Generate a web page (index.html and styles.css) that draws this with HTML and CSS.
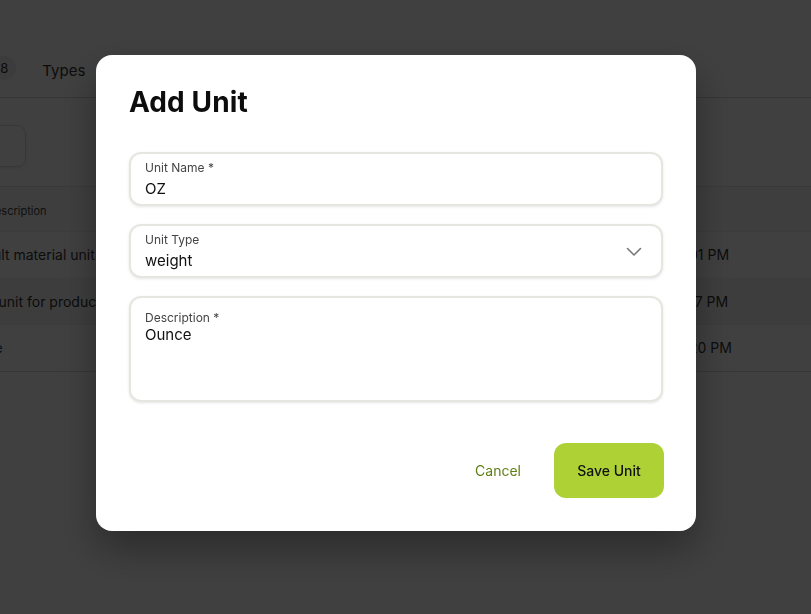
FILE: index.html
```html
<!DOCTYPE html>
<html>
<head>
<meta charset="utf-8">
<link rel="stylesheet" href="styles.css">
</head>
<body>
<div class="page">
  <div class="content">
    <div class="tabs">
      <div class="tab">Units <span class="badge">8</span></div>
      <div class="tab">Types</div>
    </div>
    <div class="toolbar">
      <div class="search">Search units</div>
    </div>
    <div class="table">
      <div class="row head"><span class="c1">Description</span><span class="c2">Updated</span></div>
      <div class="row"><span class="c1">Default material unit</span><span class="c2">Jan 12, 2024 4:01 PM</span></div>
      <div class="row alt"><span class="c1">Base unit for products</span><span class="c2">Jan 12, 2024 4:17 PM</span></div>
      <div class="row"><span class="c1 link">Single</span><span class="c2">Jan 12, 2024 4:20 PM</span></div>
    </div>
  </div>
</div>
<div class="overlay">
  <div class="modal">
    <h1 class="title">Add Unit</h1>
    <div class="fields">
      <div class="field">
        <div class="label">Unit Name *</div>
        <div class="value">OZ</div>
      </div>
      <div class="field select">
        <div class="select-text">
          <div class="label">Unit Type</div>
          <div class="value">weight</div>
        </div>
        <svg class="chev" width="16" height="10" viewBox="0 0 16 10"><path d="M1.5 1.5 L8 8 L14.5 1.5" fill="none" stroke="#777" stroke-width="1.6" stroke-linecap="round" stroke-linejoin="round"/></svg>
      </div>
      <div class="field area">
        <div class="label">Description *</div>
        <div class="value">Ounce</div>
      </div>
    </div>
    <div class="actions">
      <button class="btn cancel">Cancel</button>
      <button class="btn save">Save Unit</button>
    </div>
  </div>
</div>
</body>
</html>
```

FILE: styles.css
```css
* { box-sizing: border-box; }
html, body { margin: 0; padding: 0; }
body {
  font-family: Inter, "Liberation Sans", sans-serif;
  background: #ffffff;
  color: #111;
  width: 811px;
  height: 614px;
  overflow: hidden;
}
.page {
  width: 811px;
  height: 614px;
  overflow: hidden;
}
.content {
  margin-left: -64px;
  width: 900px;
}
.tabs {
  height: 98px;
  display: flex;
  align-items: flex-end;
  gap: 26px;
  padding-bottom: 17px;
  border-bottom: 1px solid #d6d6d6;
  padding-left: 12px;
}
.tab {
  font-size: 15px;
  color: #333;
  display: flex;
  align-items: center;
  gap: 8px;
}
.badge {
  width: 24px;
  height: 24px;
  border-radius: 50%;
  background: #eeeeee;
  font-size: 13px;
  display: flex;
  align-items: center;
  justify-content: center;
}
.toolbar {
  padding: 27px 0 19px 0;
}
.search {
  width: 90px;
  height: 42px;
  border: 1px solid #dcdcdc;
  border-radius: 9px;
  box-shadow: 0 1px 3px rgba(0,0,0,0.12);
  color: transparent;
  font-size: 13px;
  padding: 12px;
}
.table {
  border-top: 1px solid #e4e4e4;
}
.row {
  display: grid;
  grid-template-columns: 680px 200px;
  height: 46.5px;
  align-items: center;
  font-size: 14px;
  color: #333;
  border-bottom: 1px solid #f0f0f0;
}
.row.head {
  height: 45px;
  font-size: 11px;
  color: #444;
  background: #f8f8f8;
  padding-top: 3px;
}
.row.head .c1 { padding-left: 51px; }
.row.alt { background: #f4f4f4; }
.row:last-child { border-bottom: 1px solid #d8d8d8; }
.c1 { padding-left: 26px; }
.c2 { margin-left: -29px; }
.link { color: #2c4d8f; }

.overlay {
  position: fixed;
  inset: 0;
  background: rgba(0,0,0,0.75);
  display: flex;
  align-items: flex-start;
  padding: 55px 0 0 96px;
}
.modal {
  width: 600px;
  height: 476px;
  background: #fff;
  border-radius: 16px;
  padding: 32px 33px 33px 33px;
  box-shadow: 0 18px 40px rgba(0,0,0,0.35);
  display: flex;
  flex-direction: column;
}
.title {
  margin: 0;
  font-size: 28px;
  line-height: 31px;
  font-weight: 700;
  color: #0d0d0d;
  letter-spacing: 0.1px;
}
.fields {
  margin-top: 34px;
  display: flex;
  flex-direction: column;
  gap: 18px;
}
.field {
  height: 54px;
  border: 2px solid #e6e6e1;
  border-radius: 12px;
  box-shadow: 0 1px 3px rgba(0,0,0,0.10);
  padding: 6px 14px 5px 14px;
  background: #fff;
}
.label {
  font-size: 12px;
  line-height: 15px;
  color: #444;
}
.value {
  font-size: 15px;
  line-height: 20px;
  color: #111;
  margin-top: 3.5px;
}
.select {
  display: flex;
  align-items: center;
  justify-content: space-between;
  padding-right: 19px;
}
.select-text { align-self: flex-start; }
.area {
  height: 106px;
  padding-top: 12px;
}
.area .value { margin-top: 0; }
.actions {
  margin-top: auto;
  display: flex;
  justify-content: flex-end;
  align-items: center;
  gap: 17px;
  margin-right: -1px;
}
.btn {
  font-family: Inter, "Liberation Sans", sans-serif;
  font-size: 14px;
  border: none;
  background: none;
  cursor: pointer;
}
.cancel {
  color: #5f7f14;
  padding: 0 16px;
  height: 55px;
}
.save {
  background: #aed136;
  color: #111;
  font-weight: 500;
  width: 110px;
  height: 55px;
  border-radius: 12px;
}
```
